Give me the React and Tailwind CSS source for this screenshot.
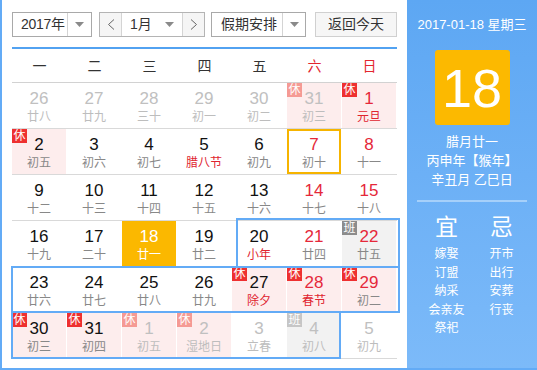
import React from "react";

const P = "pink", G = "gray", O = "orange";
const rows = [
  [
    { d: 26, l: "廿八", f: 1 },
    { d: 27, l: "廿九", f: 1 },
    { d: 28, l: "三十", f: 1 },
    { d: 29, l: "初一", f: 1 },
    { d: 30, l: "初二", f: 1 },
    { d: 31, l: "初三", f: 1, bg: P, b: "休" },
    { d: 1, l: "元旦", r: 1, lr: 1, bg: P, b: "休" },
  ],
  [
    { d: 2, l: "初五", bg: P, b: "休" },
    { d: 3, l: "初六" },
    { d: 4, l: "初七" },
    { d: 5, l: "腊八节", lr: 1 },
    { d: 6, l: "初九" },
    { d: 7, l: "初十", r: 1, sel: 1 },
    { d: 8, l: "十一", r: 1 },
  ],
  [
    { d: 9, l: "十二" },
    { d: 10, l: "十三" },
    { d: 11, l: "十四" },
    { d: 12, l: "十五" },
    { d: 13, l: "十六" },
    { d: 14, l: "十七", r: 1 },
    { d: 15, l: "十八", r: 1 },
  ],
  [
    { d: 16, l: "十九" },
    { d: 17, l: "二十" },
    { d: 18, l: "廿一", bg: O },
    { d: 19, l: "廿二" },
    { d: 20, l: "小年", lr: 1 },
    { d: 21, l: "廿四", r: 1 },
    { d: 22, l: "廿五", r: 1, bg: G, b: "班" },
  ],
  [
    { d: 23, l: "廿六" },
    { d: 24, l: "廿七" },
    { d: 25, l: "廿八" },
    { d: 26, l: "廿九" },
    { d: 27, l: "除夕", lr: 1, bg: P, b: "休" },
    { d: 28, l: "春节", r: 1, lr: 1, bg: P, b: "休" },
    { d: 29, l: "初二", r: 1, bg: P, b: "休" },
  ],
  [
    { d: 30, l: "初三", bg: P, b: "休" },
    { d: 31, l: "初四", bg: P, b: "休" },
    { d: 1, l: "初五", f: 1, bg: P, b: "休" },
    { d: 2, l: "湿地日", f: 1, bg: P, b: "休" },
    { d: 3, l: "立春", f: 1 },
    { d: 4, l: "初八", f: 1, bg: G, b: "班" },
    { d: 5, l: "初九", f: 1 },
  ],
];

function Badge({ b, f }) {
  let cls = "bg-[#ee3030]";
  if (b === "休" && f) cls = "bg-[#f59a94]";
  if (b === "班" && !f) cls = "bg-[#8c8c8c]";
  if (b === "班" && f) cls = "bg-[#c6c6c6]";
  return (
    <div
      className={`absolute top-0 left-0 w-[15px] h-[14px] text-[12px] leading-[14px] text-white text-center ${cls}`}
    >
      {b}
    </div>
  );
}

function Cell({ c }) {
  let bg = "bg-white";
  if (c.bg === P) bg = "bg-[#fdeded]";
  if (c.bg === G) bg = "bg-[#f2f2f2]";
  if (c.bg === O) bg = "bg-[#fbb800]";
  let num = "text-[#111]";
  if (c.r) num = "text-[#e5283a]";
  if (c.f) num = "text-[#c0c0c0]";
  if (c.bg === O) num = "text-white";
  let lun = "text-[#888]";
  if (c.lr) lun = "text-[#e0242f]";
  if (c.f) lun = "text-[#bdbdbd]";
  if (c.bg === O) lun = "text-white";
  return (
    <div className="pr-[1px] h-[45px]">
      <div
        className={`relative h-full flex flex-col items-center ${bg} ${
          c.sel ? "border-2 border-[#f6b400] pt-[3px]" : "pt-[5px]"
        }`}
      >
        {c.b && <Badge b={c.b} f={c.f} />}
        <div className={`text-[17px] leading-[22px] ${num}`}>{c.d}</div>
        <div className={`text-[12px] leading-[14px] whitespace-nowrap ${lun}`}>{c.l}</div>
      </div>
    </div>
  );
}

function Tri() {
  return (
    <svg width="9" height="5" viewBox="0 0 9 5">
      <path d="M0 0 L9 0 L4.5 5 Z" fill="#8a8a8a" />
    </svg>
  );
}

function Chev({ dir }) {
  return (
    <svg width="8" height="11" viewBox="0 0 8 11">
      <path
        d={dir === "l" ? "M7 0.5 L1.5 5.5 L7 10.5" : "M1 0.5 L6.5 5.5 L1 10.5"}
        fill="none"
        stroke="#666"
        strokeWidth="1"
      />
    </svg>
  );
}

const weekdays = ["一", "二", "三", "四", "五", "六", "日"];

export default function App() {
  return (
    <div className="w-[537px] h-[370px] flex bg-white border-l-2 border-b-2 border-[#63abf6] overflow-hidden font-['Liberation_Sans','Noto_Sans_CJK_SC',sans-serif]">
      {/* left */}
      <div className="w-[405px] pl-[10px] pt-[12px] flex flex-col">
        <div className="flex h-[25px] text-[14px] text-[#333] whitespace-nowrap">
          <div className="flex w-[80px] h-[25px] border border-[#a9a9a9] bg-white">
            <div className="w-[54px] pl-[8px] leading-[23px] tracking-[-0.3px]">2017年</div>
            <div className="flex-1 border-l border-[#d4d4d4] flex items-center justify-center">
              <Tri />
            </div>
          </div>
          <div className="ml-[7px] flex w-[106px] h-[25px] border border-[#b4b4b4] bg-white">
            <div className="w-[22px] bg-[#f5f5f5] border-r border-[#d4d4d4] flex items-center justify-center">
              <Chev dir="l" />
            </div>
            <div className="w-[60px] flex items-center pl-[8px] pr-[8px] justify-between">
              <span className="leading-[23px]">1月</span>
              <Tri />
            </div>
            <div className="flex-1 bg-[#f5f5f5] border-l border-[#d4d4d4] flex items-center justify-center">
              <Chev dir="r" />
            </div>
          </div>
          <div className="ml-[6px] flex w-[95px] h-[25px] border border-[#a9a9a9] bg-white">
            <div className="w-[70px] pl-[9px] leading-[23px]">假期安排</div>
            <div className="flex-1 border-l border-[#d4d4d4] flex items-center justify-center">
              <Tri />
            </div>
          </div>
          <div className="ml-[9px] w-[82px] h-[25px] border border-[#d0d0d0] bg-[#f6f6f6] text-center leading-[23px]">
            返回今天
          </div>
        </div>
        <div className="mt-[10px] w-[385px] h-[2px] bg-[#52a2f1]" />
        <div className="w-[385px] grid grid-cols-[repeat(7,55px)] h-[34px] border-b border-[#d2d2d2] text-[14px]">
          {weekdays.map((w, i) => (
            <div
              key={w}
              className={`flex items-center justify-center pt-[2px] ${
                i >= 5 ? "text-[#e3262e]" : "text-[#333]"
              }`}
            >
              {w}
            </div>
          ))}
        </div>
        <div className="relative w-[385px]">
          {rows.map((r, i) => (
            <div
              key={i}
              className="grid grid-cols-[repeat(7,55px)] border-b border-[#d9d9d9]"
            >
              {r.map((c, j) => (
                <Cell key={j} c={c} />
              ))}
            </div>
          ))}
          <div className="absolute left-[224px] top-[135px] w-[164px] h-[50px] border-2 border-[#63abf6]" />
          <div className="absolute left-[-1px] top-[183px] w-[389px] h-[47px] border-2 border-[#63abf6]" />
          <div className="absolute left-[-1px] top-[228px] w-[330px] h-[48px] border-2 border-[#63abf6]" />
        </div>
      </div>
      {/* right */}
      <div className="flex-1 bg-gradient-to-b from-[#5da7f3] to-[#7cbaf9] flex flex-col items-center text-white">
        <div className="mt-[17px] text-[13px] leading-[16px] whitespace-nowrap">2017-01-18 星期三</div>
        <div className="mt-[17px] w-[75px] h-[75px] rounded-[3px] bg-[#fcb900] flex items-center justify-center text-[54px] leading-none">
          18
        </div>
        <div className="mt-[7px] text-[13px] leading-[19px] text-center whitespace-nowrap">
          <div>腊月廿一</div>
          <div>丙申年【猴年】</div>
          <div>辛丑月 乙巳日</div>
        </div>
        <div className="mt-[11px] w-[110px] h-[2px] bg-[#a6d0fa]" />
        <div className="w-full flex pl-[12px] mt-[12px]">
          <div className="w-[55px] flex flex-col items-center">
            <div className="text-[23px] leading-[26px]">宜</div>
            <div className="mt-[5px] text-[12px] leading-[18.5px] text-center whitespace-nowrap">
              <div>嫁娶</div>
              <div>订盟</div>
              <div>纳采</div>
              <div>会亲友</div>
              <div>祭祀</div>
            </div>
          </div>
          <div className="w-[55px] flex flex-col items-center">
            <div className="text-[23px] leading-[26px]">忌</div>
            <div className="mt-[5px] text-[12px] leading-[18.5px] text-center whitespace-nowrap">
              <div>开市</div>
              <div>出行</div>
              <div>安葬</div>
              <div>行丧</div>
            </div>
          </div>
        </div>
      </div>
    </div>
  );
}
